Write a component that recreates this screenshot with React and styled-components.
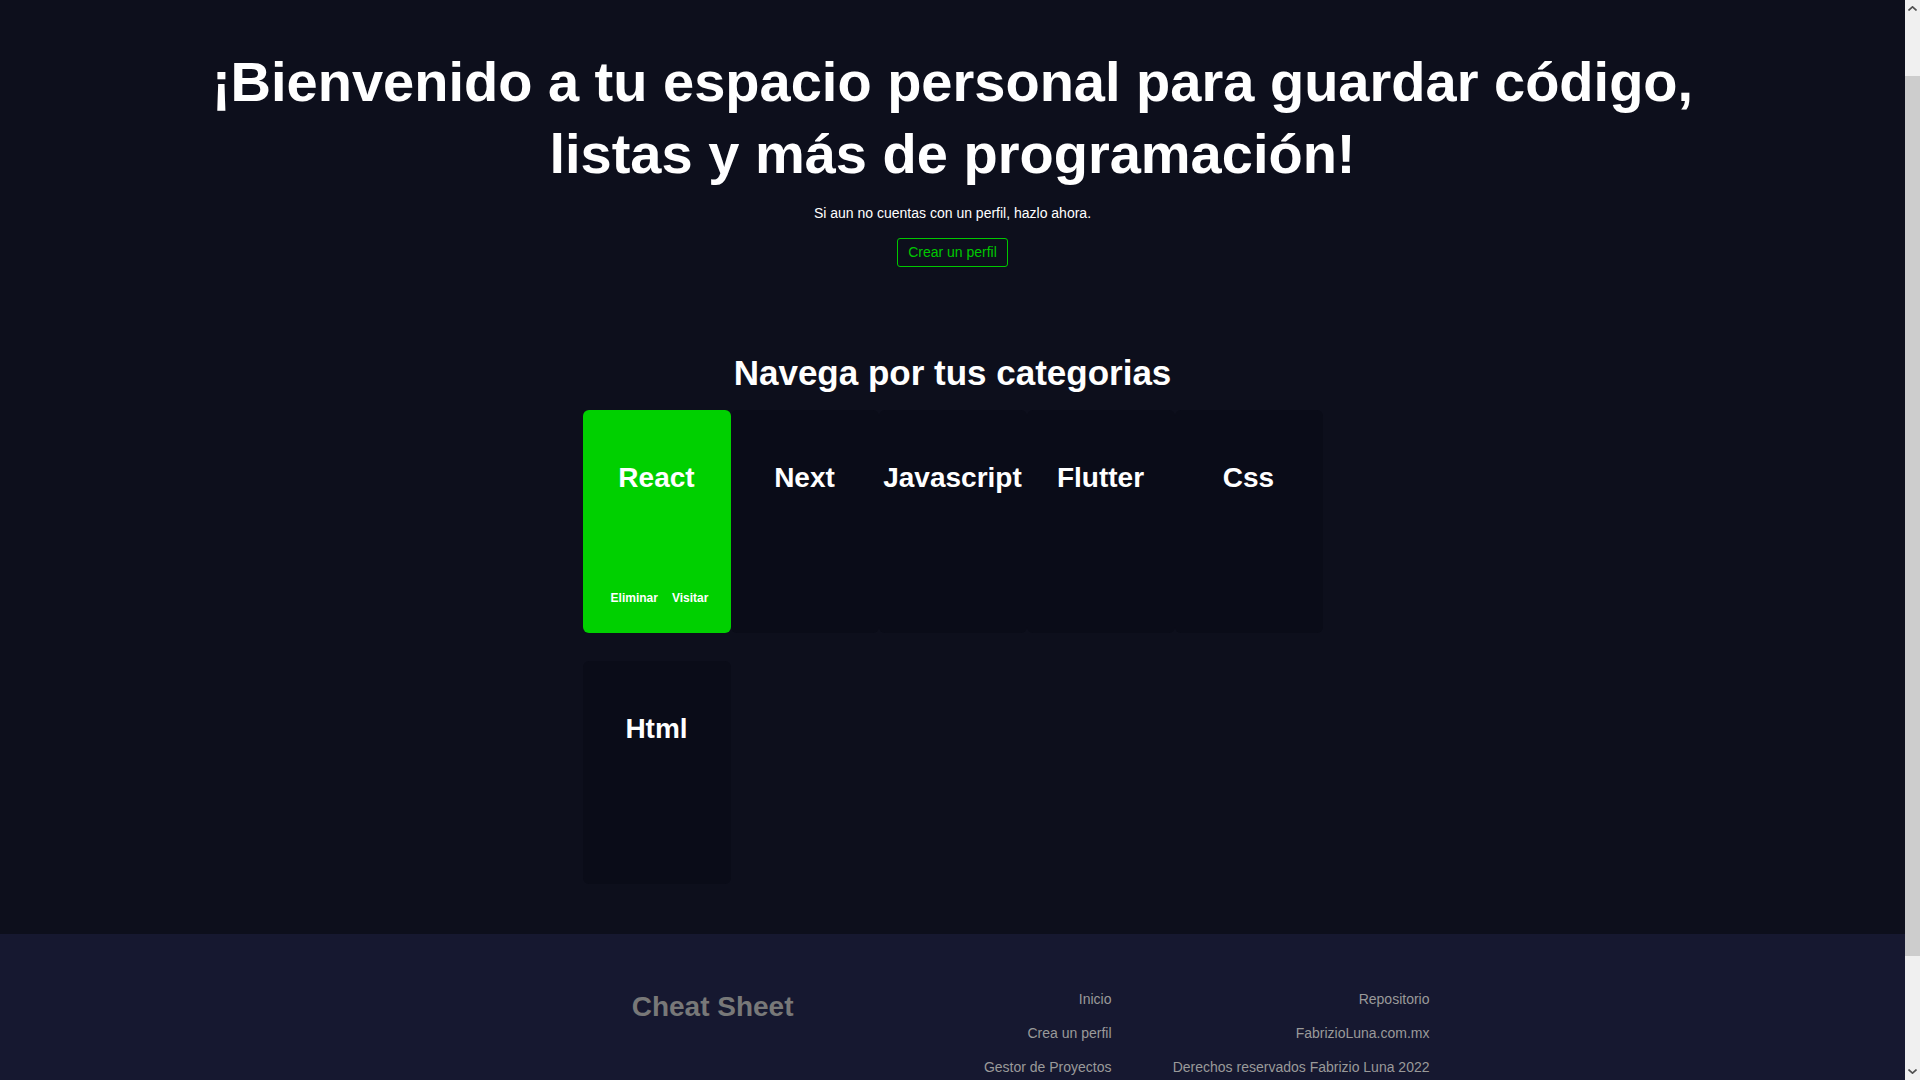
import React from "react";
import styled, { createGlobalStyle, css } from "styled-components";

const categories = [
  { name: "React", active: true },
  { name: "Next" },
  { name: "Javascript" },
  { name: "Flutter" },
  { name: "Css" },
  { name: "Html" },
];

const footerLinks = [
  ["Inicio", "Crea un perfil", "Gestor de Proyectos"],
  ["Repositorio", "FabrizioLuna.com.mx", "Derechos reservados Fabrizio Luna 2022"],
];

// the browser scrollbar seen in the screenshot (the headless one hides it)
const FakeScrollbar = () => (
  <ScrollTrack>
    <ScrollArrow>
      <svg width="9" height="5" viewBox="0 0 9 5">
        <path d="M0.5 4.5 L4.5 0.8 L8.5 4.5" fill="none" stroke="#505050" strokeWidth="1.6" />
      </svg>
    </ScrollArrow>
    <ScrollThumbArea>
      <ScrollThumb />
    </ScrollThumbArea>
    <ScrollArrow>
      <svg width="9" height="5" viewBox="0 0 9 5">
        <path d="M0.5 0.5 L4.5 4.2 L8.5 0.5" fill="none" stroke="#505050" strokeWidth="1.6" />
      </svg>
    </ScrollArrow>
  </ScrollTrack>
);

const App = () => {
  return (
    <>
      <GlobalStyle />
      <Page>
        <Hero>
          <Title>
            ¡Bienvenido a tu espacio personal para guardar código, listas y más
            de programación!
          </Title>
          <Subtitle>Si aun no cuentas con un perfil, hazlo ahora.</Subtitle>
          <OutlineButton>Crear un perfil</OutlineButton>
        </Hero>

        <Categories>
          <SectionTitle>Navega por tus categorias</SectionTitle>
          <CardGrid>
            {categories.map((c) => (
              <Card key={c.name} active={c.active}>
                <CardTitle>{c.name}</CardTitle>
                {c.active && (
                  <CardActions>
                    <CardAction>Eliminar</CardAction>
                    <CardAction>Visitar</CardAction>
                  </CardActions>
                )}
              </Card>
            ))}
          </CardGrid>
        </Categories>
      </Page>

      <Footer>
        <FooterInner>
          <Brand>Cheat Sheet</Brand>
          {footerLinks.map((col, i) => (
            <FooterCol key={i}>
              {col.map((l) => (
                <FooterLink key={l}>{l}</FooterLink>
              ))}
            </FooterCol>
          ))}
        </FooterInner>
      </Footer>

      <FakeScrollbar />
    </>
  );
};

export default App;

const GlobalStyle = createGlobalStyle`
  * {
    box-sizing: border-box;
  }
  body {
    margin: 0;
    padding-right: 15px;
    background: #0d0f1c;
    font-family: "Liberation Sans", Arial, sans-serif;
    color: #ffffff;
  }
`;

export const ScrollTrack = styled.div`
  position: fixed;
  top: 0;
  right: 0;
  bottom: 0;
  width: 15px;
  display: flex;
  flex-direction: column;
  background: #f0f0f0;
`;

export const ScrollArrow = styled.div`
  display: grid;
  place-items: center;
  height: 17px;
`;

export const ScrollThumbArea = styled.div`
  flex: 1;
  padding: 59px 0 107px;
`;

export const ScrollThumb = styled.div`
  height: 100%;
  width: 15px;
  background: #cdcdcd;
`;

export const Page = styled.main`
  display: flex;
  flex-direction: column;
  align-items: center;
  padding-top: 46px;
  padding-bottom: 50px;
`;

export const Hero = styled.section`
  display: flex;
  flex-direction: column;
  align-items: center;
  max-width: 1520px;
  text-align: center;
`;

export const Title = styled.h1`
  margin: 0;
  font-size: 56px;
  line-height: 72px;
  font-weight: 700;
`;

export const Subtitle = styled.p`
  margin: 15px 0 0;
  font-size: 14px;
  line-height: 17px;
`;

export const OutlineButton = styled.button`
  margin-top: 16px;
  padding: 5px 10px;
  background: transparent;
  border: 1px solid #00c800;
  border-radius: 3px;
  color: #00c800;
  font-family: inherit;
  font-size: 14px;
  line-height: 17px;
  cursor: pointer;
`;

export const Categories = styled.section`
  display: flex;
  flex-direction: column;
  align-items: center;
  margin-top: 86px;
`;

export const SectionTitle = styled.h2`
  margin: 0;
  font-size: 35px;
  line-height: 40px;
  font-weight: 700;
`;

export const CardGrid = styled.div`
  display: grid;
  grid-template-columns: repeat(5, 148px);
  row-gap: 28px;
  margin-top: 17px;
`;

export const Card = styled.div`
  display: flex;
  flex-direction: column;
  align-items: center;
  height: 223px;
  padding-top: 52px;
  border-radius: 6px;
  background: #0a0c18;

  ${({ active }) =>
    active &&
    css`
      background: #00d000;
    `};
`;

export const CardTitle = styled.h3`
  margin: 0;
  font-size: 28px;
  line-height: 32px;
  font-weight: 700;
`;

export const CardActions = styled.div`
  display: flex;
  gap: 14px;
  margin-top: auto;
  margin-bottom: 27px;
  padding-left: 6px;
`;

export const CardAction = styled.span`
  font-size: 12px;
  line-height: 16px;
  font-weight: 700;
  cursor: pointer;
`;

export const Footer = styled.footer`
  background: #161830;
  padding: 57px 0 214px;
`;

export const FooterInner = styled.div`
  display: grid;
  grid-template-columns: repeat(3, 318px);
  justify-content: center;
  align-items: start;
  text-align: right;
`;

export const Brand = styled.h4`
  margin: 0;
  font-size: 28px;
  line-height: 32px;
  font-weight: 700;
  color: #787878;
`;

export const FooterCol = styled.div`
  display: flex;
  flex-direction: column;
  gap: 17px;
`;

export const FooterLink = styled.a`
  font-size: 14px;
  line-height: 17px;
  color: #9a9a9a;
  cursor: pointer;
`;
